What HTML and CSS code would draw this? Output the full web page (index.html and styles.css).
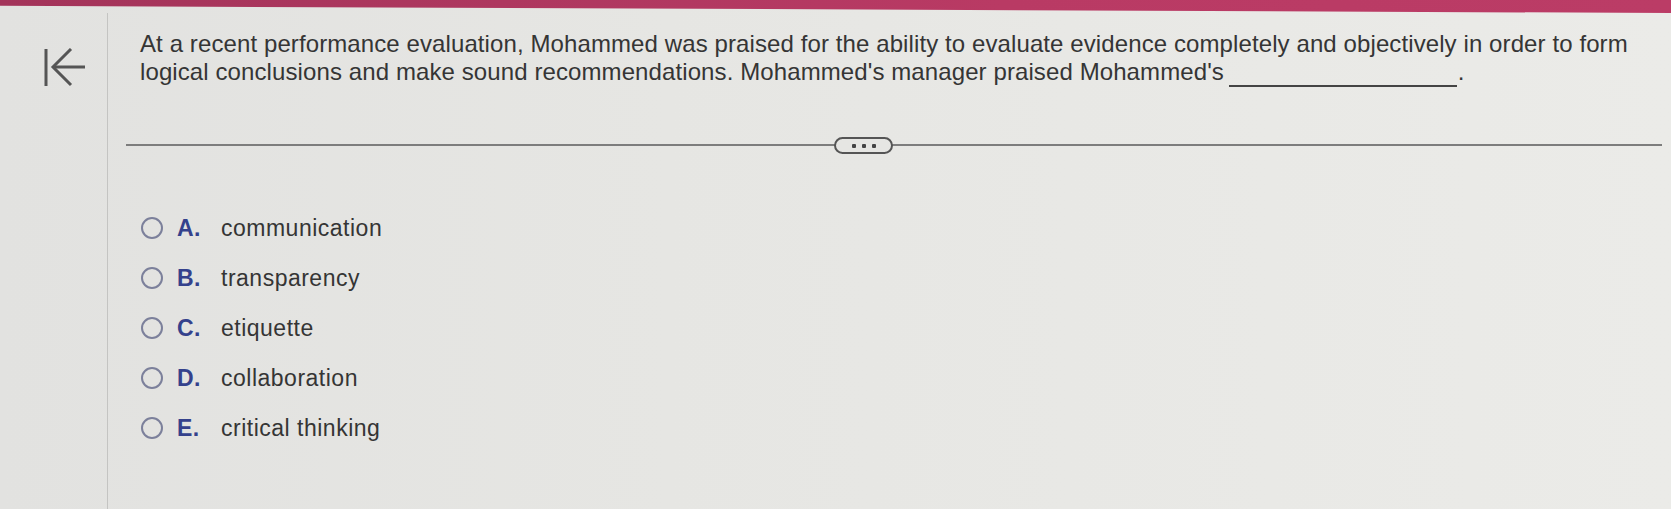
FILE: index.html
```
<!DOCTYPE html>
<html>
<head>
<meta charset="utf-8">
<link rel="stylesheet" href="styles.css">
</head>
<body>
<div class="topbar"></div>
<div class="page">
  <aside class="sidebar">
    <svg class="back" width="42" height="40" viewBox="0 0 42 40">
      <line x1="2" y1="1" x2="2" y2="38" stroke="#555" stroke-width="3"/>
      <line x1="9" y1="19" x2="41" y2="19" stroke="#555" stroke-width="3"/>
      <polyline points="27,1 9,19 27,37" fill="none" stroke="#555" stroke-width="3"/>
    </svg>
  </aside>
  <main class="content">
    <p class="question">At a recent performance evaluation, Mohammed was praised for the ability to evaluate evidence completely and objectively in order to form logical conclusions and make sound recommendations. Mohammed's manager praised Mohammed's <span class="blank"></span><span class="dot">.</span></p>
    <div class="divider">
      <span class="pill"><i></i><i></i><i></i></span>
    </div>
    <ul class="options">
      <li><span class="radio"></span><span class="letter">A.</span><span class="label">communication</span></li>
      <li><span class="radio"></span><span class="letter">B.</span><span class="label">transparency</span></li>
      <li><span class="radio"></span><span class="letter">C.</span><span class="label">etiquette</span></li>
      <li><span class="radio"></span><span class="letter">D.</span><span class="label">collaboration</span></li>
      <li><span class="radio"></span><span class="letter">E.</span><span class="label">critical thinking</span></li>
    </ul>
  </main>
</div>
</body>
</html>
```
FILE: styles.css
```
html, body {
  margin: 0;
  padding: 0;
}
body {
  width: 1671px;
  height: 509px;
  overflow: hidden;
  background: linear-gradient(90deg, #e2e2e0 0%, #e6e6e3 40%, #ebebe8 100%);
  font-family: "Liberation Sans", Arial, sans-serif;
  color: #353535;
}
.topbar {
  height: 13px;
  background: linear-gradient(90deg, #a3345a 0%, #b93a64 60%, #bb3c66 100%);
  clip-path: polygon(0 0, 100% 0, 100% 100%, 0 45%);
}
.page {
  display: flex;
  height: 496px;
}
.sidebar {
  width: 107px;
  border-right: 1px solid #c4c4c2;
  flex: none;
}
.back {
  display: block;
  margin: 35px 0 0 44px;
}
.content {
  flex: 1;
  padding: 17px 9px 0 18px;
}
.question {
  margin: 0 0 0 14px;
  font-size: 24px;
  letter-spacing: 0.1px;
  line-height: 28px;
  width: 1510px;
}
.blank {
  display: inline-block;
  width: 228px;
  height: 20px;
  border-bottom: 2px solid #444;
  margin-left: -2px;
  vertical-align: -7px;
}
.dot {
  margin-left: 1px;
}
.divider {
  position: relative;
  margin-top: 57px;
  border-top: 2px solid #7d7d7d;
  height: 0;
}
.pill {
  position: absolute;
  left: 708px;
  top: -9px;
  width: 55px;
  height: 13px;
  border: 2px solid #555;
  border-radius: 9px;
  background: #e6e6e3;
  display: flex;
  align-items: center;
  justify-content: center;
  gap: 6px;
}
.pill i {
  width: 4px;
  height: 4px;
  background: #444;
  border-radius: 1px;
}
.options {
  list-style: none;
  margin: 57px 0 0 15px;
  padding: 0;
}
.options li {
  display: flex;
  align-items: center;
  height: 50px;
  font-size: 23px;
  letter-spacing: 0.5px;
}
.radio {
  width: 18px;
  height: 18px;
  border: 2.5px solid #7c809b;
  border-radius: 50%;
  flex: none;
}
.letter {
  font-weight: bold;
  color: #34418c;
  margin-left: 14px;
  width: 44px;
}
.label {
  color: #353535;
}
```
